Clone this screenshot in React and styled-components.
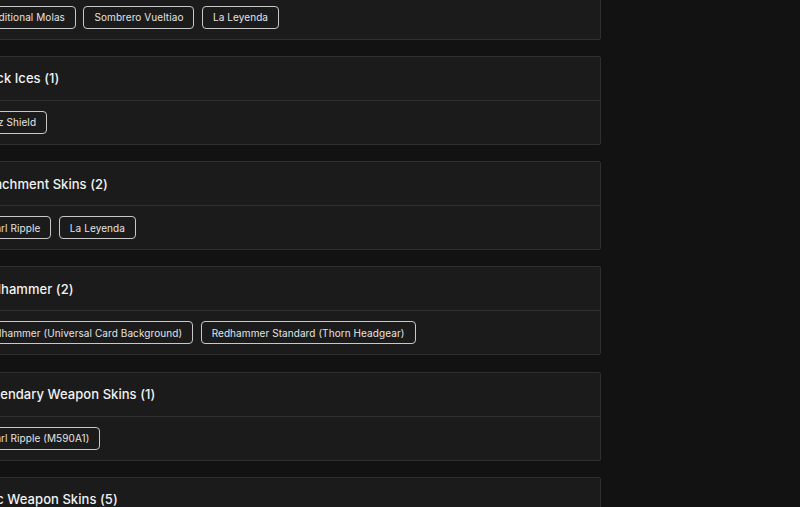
import React from "react";
import styled, { createGlobalStyle } from "styled-components";

const Global = createGlobalStyle`
  html, body { margin: 0; padding: 0; background: #121212; overflow: hidden; }
  body { font-family: Inter, "Noto Sans", sans-serif; color: #eee; }
`;

const Page = styled.div`
  width: 800px;
  height: 507px;
  overflow: hidden;
  background: #121212;
`;

const List = styled.div`
  display: flex;
  flex-direction: column;
  gap: 16.25px;
  width: 645px;
  margin-left: -44px;
  margin-top: -49.5px;
`;

const Card = styled.section`
  background: #1b1b1b;
  border: 1px solid #2f2f2f;
  border-radius: 2px;
`;

const Header = styled.div`
  height: 43px;
  display: flex;
  align-items: center;
  padding: 0 20px;
  border-bottom: 1px solid #2f2f2f;
  font-size: 13px;
  font-weight: 500;
  color: #f2f2f2;
  letter-spacing: 0.05px;
`;

const Body = styled.div`
  display: flex;
  flex-wrap: wrap;
  gap: 7.5px;
  padding: 10px 15px;
  min-height: 23px;
`;

const Tag = styled.span`
  display: inline-flex;
  align-items: center;
  height: 23px;
  box-sizing: border-box;
  padding: 0 10px;
  border: 1px solid #c8c8c8;
  border-radius: 4px;
  font-size: 10px;
  letter-spacing: 0.08px;
  color: #e4e4e4;
  white-space: nowrap;
`;

const groups = [
  { title: "Patterns (3)", tags: ["Traditional Molas", "Sombrero Vueltiao", "La Leyenda"] },
  { title: "Black Ices (1)", tags: ["Blitz Shield"] },
  { title: "Attachment Skins (2)", tags: ["Pearl Ripple", "La Leyenda"] },
  { title: "Redhammer (2)", tags: ["Redhammer (Universal Card Background)", "Redhammer Standard (Thorn Headgear)"] },
  { title: "Legendary Weapon Skins (1)", tags: ["Pearl Ripple (M590A1)"] },
  { title: "Epic Weapon Skins (5)", tags: ["Pearl Ripple"] },
];

export default function App() {
  return (
    <Page>
      <Global />
      <List>
        {groups.map((g) => (
          <Card key={g.title}>
            <Header>{g.title}</Header>
            <Body>
              {g.tags.map((t) => (
                <Tag key={t}>{t}</Tag>
              ))}
            </Body>
          </Card>
        ))}
      </List>
    </Page>
  );
}
